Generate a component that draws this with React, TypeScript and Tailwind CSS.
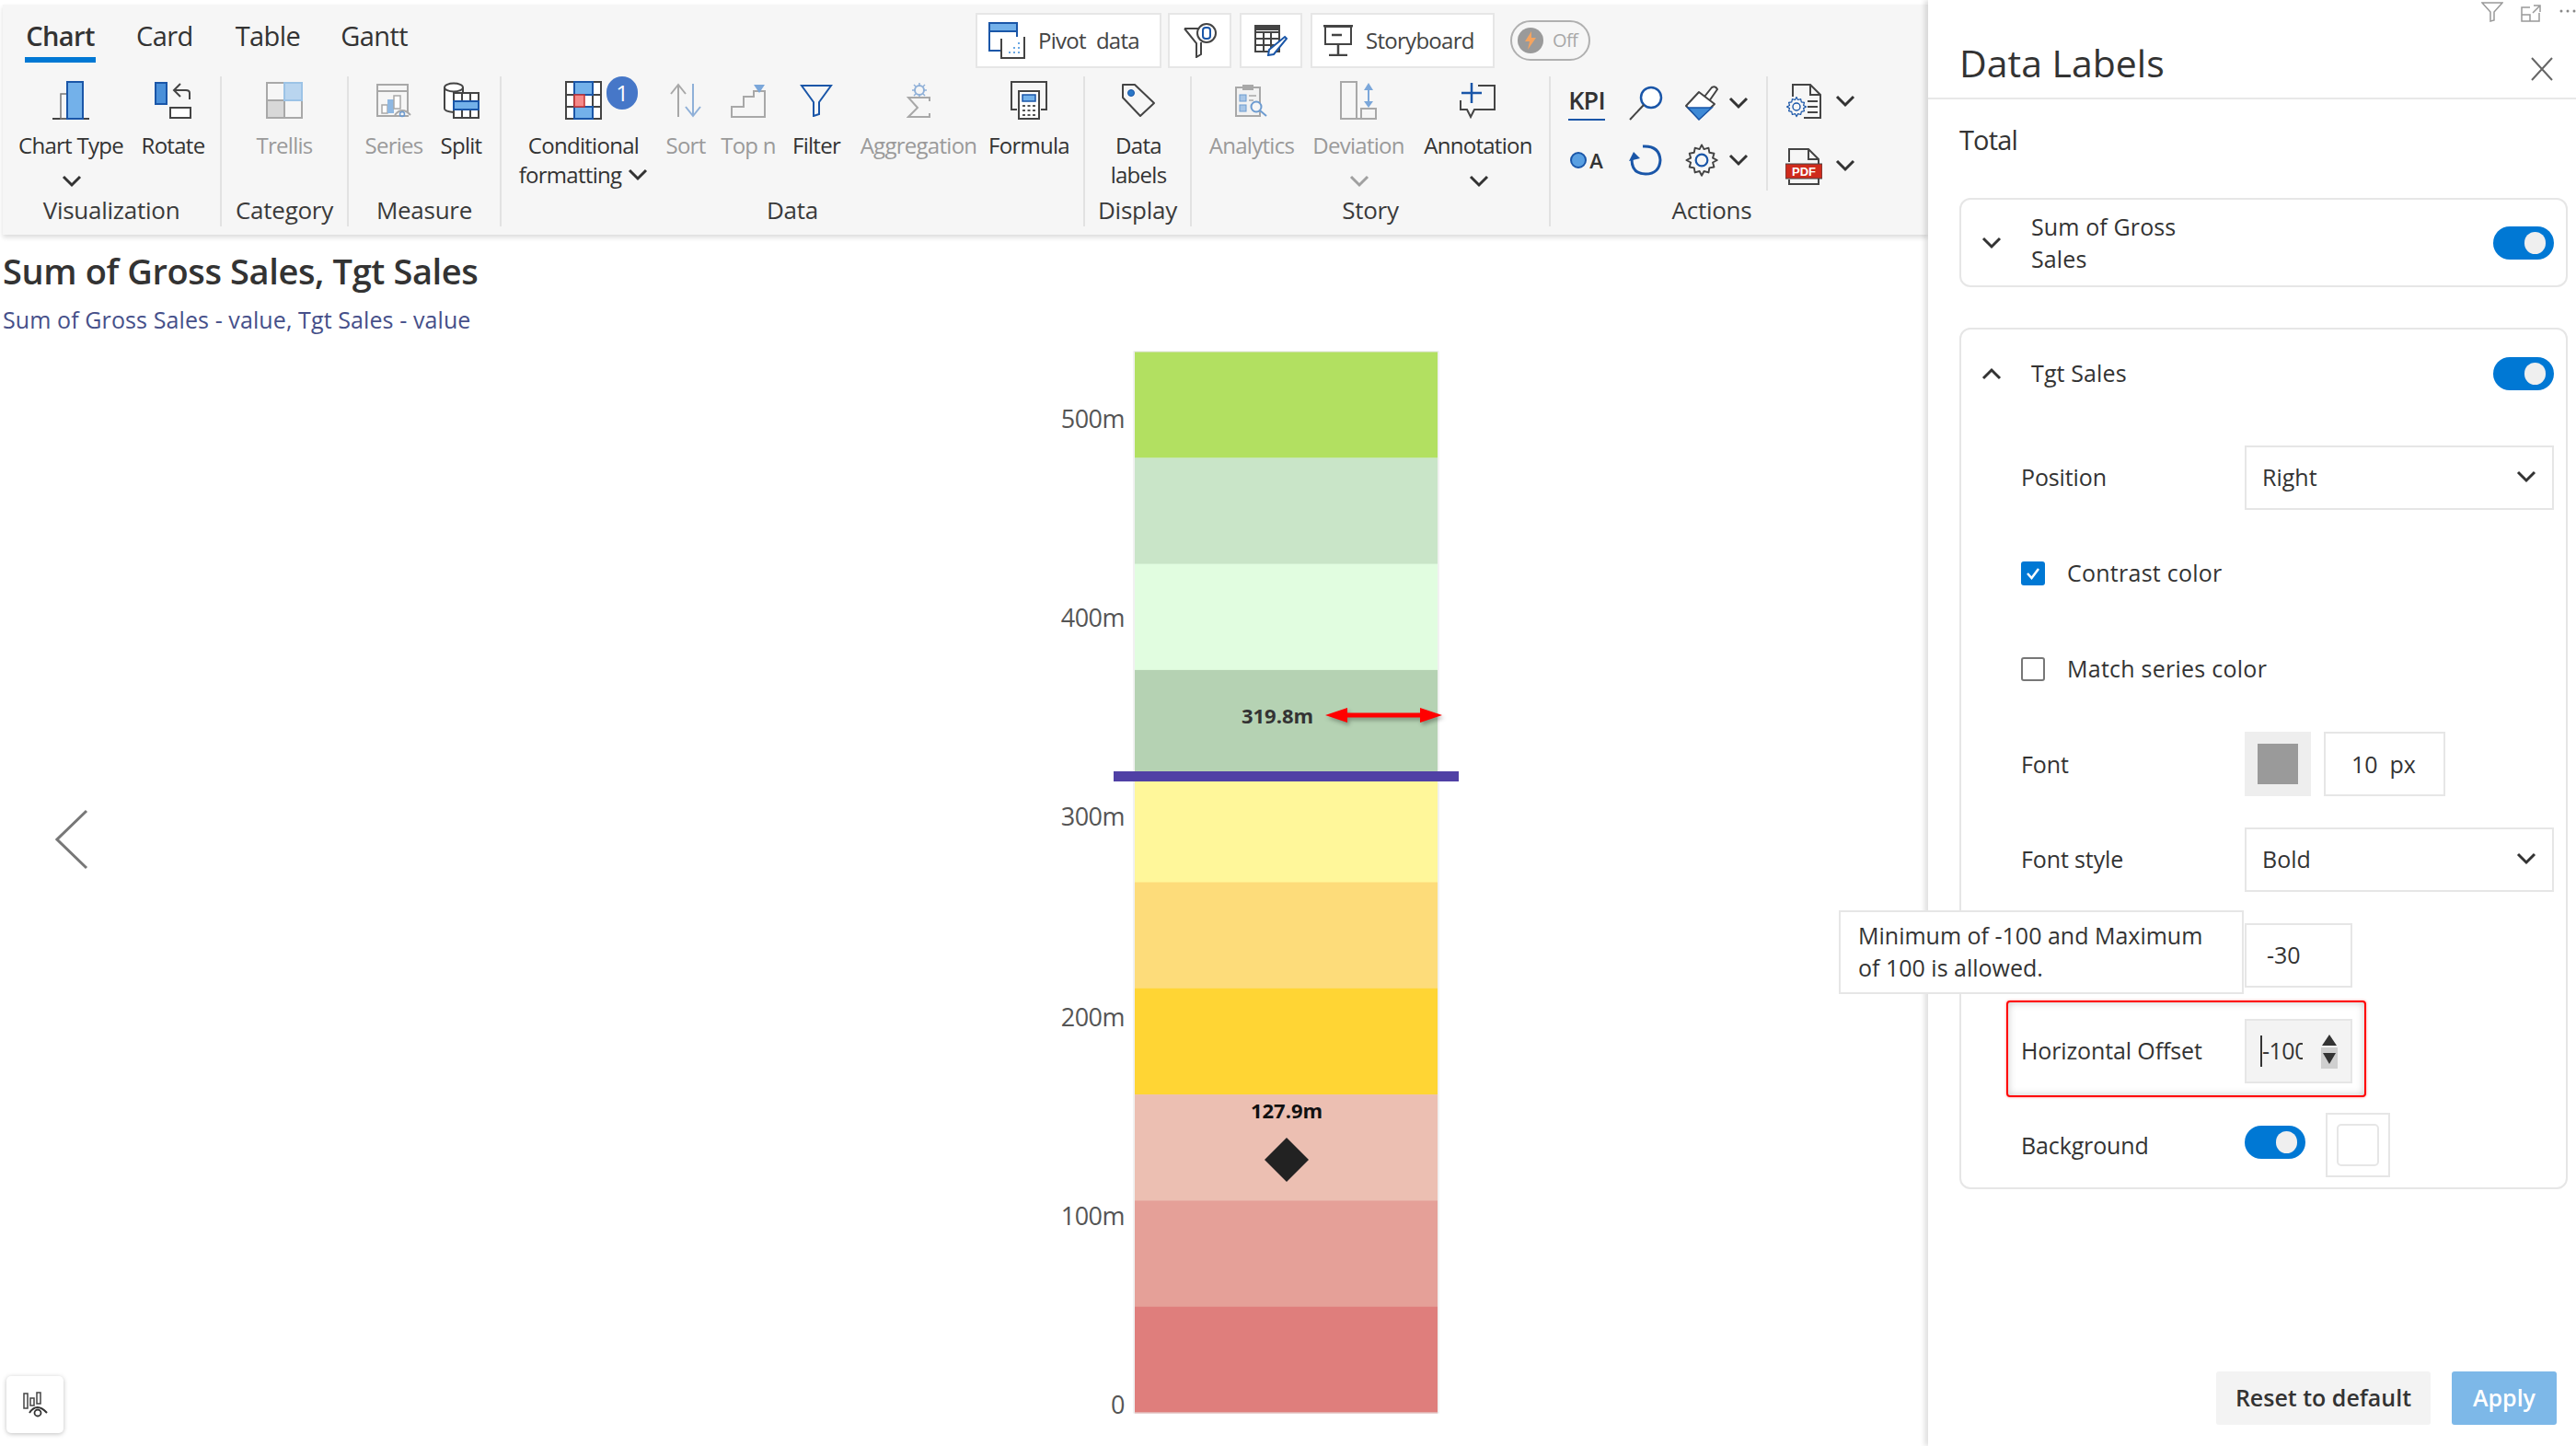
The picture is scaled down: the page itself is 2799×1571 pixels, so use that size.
import React from "react";

const BLUE = "#1a56a8";
const LB = "#73b1ea";
const DK = "#444444";
const GR = "#a8a8a8";

const Svg = ({ w, h, children }: { w: number; h: number; children: React.ReactNode }) => (
  <svg width={w} height={h} viewBox={`0 0 ${w} ${h}`} fill="none" className="block shrink-0">
    {children}
  </svg>
);

const Chevron = ({ dim = false, up = false }: { dim?: boolean; up?: boolean }) => (
  <svg width="22" height="14" viewBox="0 0 22 14" fill="none" className="block shrink-0">
    <path d={up ? "M2 12 L11 3 L20 12" : "M2 2 L11 11 L20 2"} stroke={dim ? "#a0a0a0" : "#333"} strokeWidth="3" />
  </svg>
);

const IconChartType = () => (
  <Svg w={40} h={42}>
    <path d="M0 41H40" stroke={DK} strokeWidth="2" />
    <rect x="9" y="14" width="7" height="27" stroke="#777" strokeWidth="1.5" />
    <rect x="16" y="1" width="17" height="40" fill={LB} stroke={BLUE} strokeWidth="2" />
  </Svg>
);
const IconRotate = () => (
  <Svg w={40} h={40}>
    <rect x="1" y="1" width="12" height="23" fill="#4a90d9" stroke={BLUE} strokeWidth="2" />
    <path d="M38 19V12Q38 9 34 9H21M28 2L21 9L28 16" stroke={DK} strokeWidth="2" />
    <rect x="17" y="28" width="22" height="11" fill="#fff" stroke={DK} strokeWidth="2" />
  </Svg>
);
const IconTrellis = () => (
  <Svg w={40} h={40}>
    <rect x="20" y="1" width="19" height="19" fill="#b9d5ef" />
    <rect x="1" y="20" width="19" height="19" fill="#d8d8d8" />
    <rect x="1" y="1" width="38" height="38" stroke="#a8a8a8" strokeWidth="2" />
    <path d="M20 1V39M1 20H39" stroke="#a8a8a8" strokeWidth="2" />
    <path d="M20 1H39V20H20Z" stroke="#9cc3e6" strokeWidth="2" />
  </Svg>
);
const IconSeries = () => (
  <Svg w={38} h={37}>
    <rect x="1" y="1" width="33" height="34" stroke={GR} strokeWidth="2" />
    <path d="M1 8H34" stroke={GR} strokeWidth="2" />
    <rect x="6" y="23" width="6" height="9" fill="#fff" stroke={GR} strokeWidth="1.5" />
    <rect x="12" y="17" width="7" height="15" fill="#8fb8e2" />
    <rect x="19" y="13" width="7" height="14" fill="#fff" stroke={GR} strokeWidth="1.5" />
    <path d="M20 34Q28 24 37 34" fill="#f6f6f6" stroke={GR} strokeWidth="2" />
    <circle cx="28" cy="33" r="2.5" stroke="#6d9bd0" strokeWidth="1.5" />
  </Svg>
);
const IconSplit = () => (
  <Svg w={40} h={40}>
    <path d="M2 6V28Q2 32 12 32V8Z" fill="#fff" />
    <ellipse cx="12" cy="6" rx="10" ry="4.5" fill="#fff" stroke={DK} strokeWidth="2" />
    <path d="M2 6V29Q2 32 12 33M22 6V11" stroke={DK} strokeWidth="2" />
    <rect x="12" y="12" width="27" height="27" fill="#fff" stroke={DK} strokeWidth="2" />
    <path d="M21 12V39M30 12V39" stroke={DK} strokeWidth="2" />
    <rect x="12" y="21" width="27" height="9" fill={LB} stroke={BLUE} strokeWidth="2" />
  </Svg>
);
const IconConditional = () => (
  <Svg w={40} h={42}>
    <rect x="1" y="1" width="38" height="40" fill="#fff" stroke={DK} strokeWidth="2" />
    <path d="M1 15H39M1 28H39M10 1V41M30 1V41" stroke={DK} strokeWidth="2" />
    <rect x="10" y="1" width="20" height="14" fill={LB} stroke={BLUE} strokeWidth="2" />
    <rect x="10" y="28" width="20" height="13" fill={LB} stroke={BLUE} strokeWidth="2" />
    <rect x="10" y="15" width="11" height="13" fill="#f58a8a" stroke="#c43030" strokeWidth="1.5" />
  </Svg>
);
const IconSort = () => (
  <Svg w={36} h={38}>
    <path d="M10 37V2M2 12L10 2L18 12" stroke={GR} strokeWidth="2" />
    <path d="M26 1V36M18 26L26 36L34 26" stroke="#8fb0d8" strokeWidth="2" />
  </Svg>
);
const IconTopN = () => (
  <Svg w={38} h={37}>
    <path d="M1 36V25H14V14H25V8H37V36Z" stroke={GR} strokeWidth="2" />
    <path d="M25 1H37L31 10Z" fill="#7ba7da" />
  </Svg>
);
const IconFilter = () => (
  <Svg w={36} h={36}>
    <path d="M2 2H34L21 20V33L15 35V20Z" stroke={BLUE} strokeWidth="2" />
  </Svg>
);
const IconAggregation = () => (
  <Svg w={27} h={39}>
    <circle cx="14" cy="8" r="5" stroke="#8fb0d8" strokeWidth="2" />
    <path d="M14 0V3M14 13V16M6 8H9M19 8H22M8 2L10 4M20 2L18 4M8 14L10 12M20 14L18 12" stroke="#8fb0d8" strokeWidth="1.5" />
    <path d="M25 20V16H2L12 27L2 37H25V33" stroke={GR} strokeWidth="2" />
  </Svg>
);
const IconFormula = () => (
  <Svg w={40} h={42}>
    <path d="M7 31H1V1H39V31H33" stroke={DK} strokeWidth="2" />
    <rect x="9" y="11" width="22" height="30" fill="#fff" stroke={DK} strokeWidth="2" />
    <rect x="13" y="15" width="14" height="7" fill={LB} stroke={BLUE} strokeWidth="1.5" />
    <path d="M13 27H16M18.5 27H21.5M24 27H27M13 32H16M18.5 32H21.5M24 32H27M13 37H16M18.5 37H21.5M24 37H27" stroke="#555" strokeWidth="2" />
  </Svg>
);
const IconTag = () => (
  <Svg w={38} h={38}>
    <path d="M2 2H15L36 22L21 36L2 16Z" stroke={DK} strokeWidth="2" strokeLinejoin="round" />
    <circle cx="11" cy="11" r="3.5" fill="#2a78c8" stroke={BLUE} />
  </Svg>
);
const IconAnalytics = () => (
  <Svg w={36} h={36}>
    <rect x="1" y="4" width="26" height="31" fill="#f2f2f2" stroke={GR} strokeWidth="2" />
    <rect x="8" y="1" width="12" height="6" fill={GR} />
    <rect x="5" y="12" width="7" height="7" fill="#a8c6e6" stroke="#6d9bd0" />
    <rect x="5" y="23" width="7" height="7" fill="#a8c6e6" stroke="#6d9bd0" />
    <path d="M15 13H23M15 18H20" stroke={GR} strokeWidth="1.5" />
    <circle cx="23" cy="25" r="5.5" fill="#f6f6f6" stroke="#6d9bd0" strokeWidth="2" />
    <path d="M27 29L34 35" stroke="#6d9bd0" strokeWidth="2" />
  </Svg>
);
const IconDeviation = () => (
  <Svg w={40} h={42}>
    <path d="M0 41H40" stroke={GR} strokeWidth="2" />
    <rect x="1" y="1" width="17" height="40" stroke={GR} strokeWidth="2" />
    <rect x="23" y="30" width="16" height="11" stroke={GR} strokeWidth="2" />
    <path d="M31 4V27" stroke="#7ba7da" strokeWidth="2" />
    <path d="M26 10L31 2L36 10ZM26 22L31 29L36 22Z" fill="#7ba7da" />
  </Svg>
);
const IconAnnotation = () => (
  <Svg w={40} h={40}>
    <path d="M20 4H38V30H16L12 38L8 30H1V20" stroke={DK} strokeWidth="2" />
    <path d="M13 1V23M2 12H24" stroke={BLUE} strokeWidth="2.5" />
  </Svg>
);
const IconMagnifier = () => (
  <Svg w={46} h={38}>
    <circle cx="25" cy="13" r="11" fill="#fff" stroke={BLUE} strokeWidth="2.5" />
    <path d="M17 21L2 37" stroke={DK} strokeWidth="2" />
  </Svg>
);
const IconBrush = () => (
  <Svg w={38} h={38}>
    <path d="M22 12L30 2Q34 0 36 4L27 17" stroke={DK} strokeWidth="2" fill="#fff" />
    <path d="M16 7L33 20L16 36L2 22Z" fill="#fff" stroke={DK} strokeWidth="2" strokeLinejoin="round" />
    <path d="M4 24L30 24L16 37Z" fill="#3f8ad6" stroke={BLUE} strokeWidth="1.5" />
  </Svg>
);
const Gear = ({ c = DK, size = 38 }: { c?: string; size?: number }) => (
  <svg width={size} height={size} viewBox="0 0 24 24" fill="none" className="block shrink-0">
    <path
      d="M12 1.5l1.6 3 3.1-.9.6 3.2 3.2.6-.9 3.1 3 1.5-3 1.6.9 3.1-3.2.6-.6 3.2-3.1-.9-1.6 3-1.5-3-3.1.9-.6-3.2-3.2-.6.9-3.1-3-1.6 3-1.5-.9-3.1 3.2-.6.6-3.2 3.1.9z"
      stroke={c}
      strokeWidth="1.2"
      strokeLinejoin="round"
    />
    <circle cx="12" cy="12" r="4" stroke={BLUE} strokeWidth="1.4" />
  </svg>
);
const IconRefresh = () => (
  <Svg w={44} h={34}>
    <path d="M15 2Q33 1 34 17Q33 32 18 32Q3 32 3 16" stroke={BLUE} strokeWidth="3" />
    <path d="M0 18L5 8L12 15Z" fill={BLUE} />
  </Svg>
);
const IconDocGear = () => (
  <Svg w={40} h={38}>
    <path d="M8 14V1H27L38 12V37H20" stroke={DK} strokeWidth="2" />
    <path d="M27 1V12H38M24 19H35M24 25H35M24 31H35" stroke={DK} strokeWidth="2" />
    <g transform="translate(0,13)">
      <Gear c={BLUE} size={24} />
    </g>
  </Svg>
);
const IconPdf = () => (
  <Svg w={40} h={40}>
    <path d="M4 15V1H25L36 12V39H4V34" stroke={DK} strokeWidth="2" />
    <path d="M25 1V12H36" stroke={DK} strokeWidth="2" />
    <rect x="0" y="17" width="40" height="16" fill="#cf2b1c" stroke={DK} />
    <text x="20" y="30" textAnchor="middle" fill="#fff" fontSize="13" fontWeight="700" className="font-['Liberation_Sans',sans-serif]">
      PDF
    </text>
  </Svg>
);

const IconPivot = () => (
  <Svg w={40} h={40}>
    <rect x="1" y="1" width="30" height="30" fill="#fff" stroke={BLUE} strokeWidth="2" />
    <rect x="1" y="1" width="30" height="9" fill={LB} stroke={BLUE} strokeWidth="2" />
    <rect x="14" y="16" width="25" height="23" fill="#fff" />
    <path d="M14 18V39H39V16" stroke={DK} strokeWidth="2" />
    <path d="M22 33H24M27 33H29M32 33H34M27 28H29M32 28H34M32 23H34" stroke="#6aa8e4" strokeWidth="2" />
  </Svg>
);
const IconFunnelDb = () => (
  <Svg w={36} h={38}>
    <path d="M1 6H24M1 6L14 22V37L19 34V21" stroke={DK} strokeWidth="2" />
    <circle cx="25" cy="11" r="10" fill="#fff" stroke={DK} strokeWidth="2" />
    <rect x="21" y="5" width="8" height="12" rx="3" stroke={BLUE} strokeWidth="2" />
  </Svg>
);
const IconTableEdit = () => (
  <Svg w={36} h={34}>
    <rect x="1" y="1" width="26" height="28" fill="#fff" stroke={DK} strokeWidth="2" />
    <path d="M1 8H27M1 15H27M1 22H27M10 8V29M18 8V29" stroke={DK} strokeWidth="2" />
    <rect x="1" y="1" width="26" height="5" fill={DK} />
    <path d="M33 13L35 15L21 32L15 33L16 27Z" fill="#fff" stroke={BLUE} strokeWidth="2" />
  </Svg>
);
const IconStoryboard = () => (
  <Svg w={32} h={34}>
    <path d="M0 1H32" stroke={DK} strokeWidth="3" />
    <rect x="2" y="2" width="28" height="19" stroke={DK} strokeWidth="2" />
    <path d="M9 11H20M16 21V33M6 33H26" stroke={DK} strokeWidth="2.5" />
  </Svg>
);

type ToolProps = {
  w: number;
  icon: React.ReactNode;
  lines: string[];
  dim?: boolean;
  chev?: boolean;
  inlineChev?: boolean;
};

const Tool = ({ w, icon, lines, dim, chev, inlineChev }: ToolProps) => (
  <div className="flex flex-col items-center shrink-0" style={{ width: w }}>
    <div className="h-[52px] flex items-center justify-center">{icon}</div>
    <div className={`mt-[7px] text-[24px] leading-[32px] text-center tracking-[-0.03em] whitespace-nowrap ${dim ? "text-[#9a9a9a]" : "text-[#333333]"}`}>
      {lines.map((l, i) => (
        <div key={l} className="flex items-center justify-center gap-[7px]">
          {l}
          {inlineChev && i === lines.length - 1 && <Chevron />}
        </div>
      ))}
    </div>
    {chev && (
      <div className="mt-[16px] ml-[2px]">
        <Chevron dim={dim} />
      </div>
    )}
  </div>
);

const Group = ({ w, pl, label, labelW, children, last }: { w: number; pl: number; label: string; labelW?: number; children: React.ReactNode; last?: boolean }) => (
  <div className={`shrink-0 h-full flex flex-col ${last ? "" : "border-r-2 border-[#e2e2e2]"}`} style={{ width: w }}>
    <div className="h-[129px] flex items-start" style={{ paddingLeft: pl }}>
      {children}
    </div>
    <div className="h-[32px] text-[26px] leading-[32px] font-medium text-center text-[#3a3a3a] tracking-[-0.01em]" style={{ width: labelW }}>
      {label}
    </div>
  </div>
);

const TopBtn = ({ className, children }: { className: string; children: React.ReactNode }) => (
  <div className={`h-[60px] bg-white border-2 border-[#e6e6e6] flex items-center text-[24px] text-[#444] tracking-[-0.03em] ${className}`}>{children}</div>
);

const Ribbon = () => (
  <div className="relative z-10 ml-[3px] mt-[5px] h-[250px] bg-[#f6f6f6] shadow-[0_3px_5px_rgba(0,0,0,0.14)] flex flex-col shrink-0">
    <div className="h-[78px] flex items-start shrink-0">
      <div className="flex items-start pl-[24px] text-[29px] text-[#333] tracking-[-0.02em] w-[1057px]">
        <div className="h-[63px] w-[77px] pt-[14px] leading-[40px] font-semibold border-b-[6px] border-[#0078d4] text-center">Chart</div>
        <div className="ml-[44px] pt-[14px] leading-[40px]">Card</div>
        <div className="ml-[46px] pt-[14px] leading-[40px]">Table</div>
        <div className="ml-[44px] pt-[14px] leading-[40px]">Gantt</div>
      </div>
      <div className="flex items-center mt-[9px]">
        <TopBtn className="w-[202px] pl-[12px] gap-[14px]">
          <IconPivot />
          <span className="whitespace-pre">Pivot  data</span>
        </TopBtn>
        <TopBtn className="ml-[7px] w-[69px] justify-center">
          <IconFunnelDb />
        </TopBtn>
        <TopBtn className="ml-[9px] w-[68px] justify-center">
          <IconTableEdit />
        </TopBtn>
        <TopBtn className="ml-[9px] w-[200px] pl-[12px] gap-[14px]">
          <IconStoryboard />
          <span>Storyboard</span>
        </TopBtn>
        <div className="ml-[17px] w-[87px] h-[44px] rounded-full border-2 border-[#b0b0b0] flex items-center pl-[6px] gap-[10px]">
          <div className="w-[28px] h-[28px] rounded-full bg-[#9a9a9a] flex items-center justify-center">
            <svg width="14" height="20" viewBox="0 0 14 20" className="block">
              <path d="M8 0L1 11H6L4 20L13 7H8Z" fill="#f4a460" />
            </svg>
          </div>
          <span className="text-[20px] text-[#a8a8a8] tracking-[-0.03em]">Off</span>
        </div>
      </div>
    </div>
    <div className="h-[163px] flex shrink-0">
      <Group w={238} pl={10} label="Visualization">
        <Tool w={128} icon={<IconChartType />} lines={["Chart Type"]} chev />
        <Tool w={94} icon={<IconRotate />} lines={["Rotate"]} />
      </Group>
      <Group w={138} pl={8} label="Category">
        <Tool w={120} icon={<IconTrellis />} lines={["Trellis"]} dim />
      </Group>
      <Group w={166} pl={14} label="Measure">
        <Tool w={70} icon={<IconSeries />} lines={["Series"]} dim />
        <Tool w={76} icon={<IconSplit />} lines={["Split"]} />
      </Group>
      <Group w={634} pl={14} label="Data">
        <div className="relative shrink-0">
          <Tool w={150} icon={<IconConditional />} lines={["Conditional", "formatting"]} inlineChev />
          <div className="absolute left-[100px] top-[0px] w-[34px] h-[36px] rounded-full bg-[#4677c8] text-white text-[24px] leading-[36px] text-center">1</div>
        </div>
        <Tool w={72} icon={<IconSort />} lines={["Sort"]} dim />
        <Tool w={64} icon={<IconTopN />} lines={["Top n"]} dim />
        <Tool w={84} icon={<IconFilter />} lines={["Filter"]} />
        <Tool w={138} icon={<IconAggregation />} lines={["Aggregation"]} dim />
        <Tool w={102} icon={<IconFormula />} lines={["Formula"]} />
      </Group>
      <Group w={116} pl={8} label="Display">
        <Tool w={100} icon={<IconTag />} lines={["Data", "labels"]} />
      </Group>
      <Group w={390} pl={5} label="Story">
        <Tool w={120} icon={<IconAnalytics />} lines={["Analytics"]} dim />
        <Tool w={112} icon={<IconDeviation />} lines={["Deviation"]} dim chev />
        <Tool w={148} icon={<IconAnnotation />} lines={["Annotation"]} chev />
      </Group>
      <Group w={407} pl={0} label="Actions" labelW={350} last>
        <div className="flex h-[124px]">
          <div className="w-[234px] grid grid-cols-[78px_57px_58px_22px] grid-rows-[58px_66px] justify-items-center items-center">
            <div className="text-[27px] font-semibold leading-[32px] text-[#333] border-b-[2px] border-[#1a56a8] pb-[4px] tracking-[-0.03em]">KPI</div>
            <IconMagnifier />
            <IconBrush />
            <Chevron />
            <div className="flex items-center gap-[3px]">
              <div className="w-[18px] h-[18px] rounded-full bg-[#5aa0e2] border-2 border-[#1a56a8]" />
              <span className="text-[22px] font-semibold text-[#333]">A</span>
            </div>
            <IconRefresh />
            <Gear />
            <Chevron />
          </div>
          <div className="border-l-2 border-[#e2e2e2] pl-[16px] grid grid-cols-[46px_44px] grid-rows-[54px_70px] items-center justify-items-center">
            <IconDocGear />
            <Chevron />
            <div className="mt-[18px]">
              <IconPdf />
            </div>
            <div className="mt-[16px]">
              <Chevron />
            </div>
          </div>
        </div>
      </Group>
    </div>
  </div>
);

const bands = ["#b2e061", "#c9e5c8", "#e1fde0", "#b5d2b3", "#fff79a", "#fddc7a", "#ffd534", "#ecbfb2", "#e5a098", "#df7e7c"];
const axis: [string, number][] = [
  ["500m", 85],
  ["400m", 301],
  ["300m", 517],
  ["200m", 735],
  ["100m", 951],
  ["0", 1156],
];

const Chart = () => (
  <svg width="2095" height="1201" viewBox="0 0 2095 1201" className="block">
    {bands.map((c, i) => (
      <rect key={c} x={1233} y={12 + i * 115.3} width={329} height={115.8} fill={c} />
    ))}
    <rect x={1232} y={12} width={331} height={1153} stroke="#e4e4e4" strokeWidth="1" fill="none" />
    {axis.map(([t, y]) => (
      <text key={t} x={1222} y={y + 10} textAnchor="end" fontSize="27" fill="#555" letterSpacing="-0.5">
        {t}
      </text>
    ))}
    <rect x={1210} y={468} width={375} height={11} fill="#5040a5" />
    <text x={1388} y={416} textAnchor="middle" fontSize="22" fontWeight="700" fill="#333">
      319.8m
    </text>
    <g style={{ filter: "drop-shadow(2px 3px 2px rgba(0,0,0,0.3))" }}>
      <path d="M1462 407H1544" stroke="#ff0000" strokeWidth="5" />
      <path d="M1440 407L1464 399V415ZM1567 407L1543 399V415Z" fill="#ff0000" />
    </g>
    <text x={1398} y={845} textAnchor="middle" fontSize="22" fontWeight="700" fill="#111">
      127.9m
    </text>
    <path d="M1398 866L1422 890L1398 914L1374 890Z" fill="#222" />
  </svg>
);

const Toggle = () => (
  <div className="w-[66px] h-[36px] rounded-full bg-[#0078d4] relative shrink-0">
    <div className="absolute right-[9px] top-[6px] w-[23px] h-[24px] rounded-full bg-[#efefef]" />
  </div>
);

const Select = ({ v }: { v: string }) => (
  <div className="w-[336px] h-[70px] border-2 border-[#e6e6e6] flex items-center justify-between pl-[17px] pr-[17px] text-[25px] text-[#333]">
    <span>{v}</span>
    <div className="-mt-[2px]">
      <Chevron />
    </div>
  </div>
);

const Row = ({ label, children, className = "" }: { label: string; children: React.ReactNode; className?: string }) => (
  <div className={`relative h-[70px] flex items-center shrink-0 ${className}`}>
    <div className="w-[243px] text-[25px] text-[#333] tracking-[-0.005em] whitespace-nowrap">{label}</div>
    {children}
  </div>
);

const Check = ({ on, label }: { on: boolean; label: string }) => (
  <div className="h-[70px] flex items-center gap-[24px] shrink-0">
    <div className={`w-[26px] h-[26px] rounded-[3px] flex items-center justify-center ${on ? "bg-[#0078d4]" : "border-2 border-[#777] bg-white"}`}>
      {on && (
        <svg width="20" height="20" viewBox="0 0 20 20" className="block">
          <path d="M4 10L8.5 15L16 5" stroke="#fff" strokeWidth="2.5" fill="none" />
        </svg>
      )}
    </div>
    <span className="text-[25px] font-medium text-[#333] tracking-[0.01em]">{label}</span>
  </div>
);

const Panel = () => (
  <div className="relative w-[704px] shrink-0 h-full bg-white shadow-[-4px_0_5px_rgba(0,0,0,0.12)] z-20 flex flex-col">
    <div className="absolute top-[2px] left-[601px] flex items-start">
      <svg width="24" height="22" viewBox="0 0 24 22" fill="none" className="block">
        <path d="M1 1H23L14 11V20L10 21V11Z" stroke="#999" strokeWidth="1.5" />
      </svg>
      <svg width="22" height="20" viewBox="0 0 22 20" fill="none" className="block ml-[19px] mt-[3px]">
        <path d="M10 3H1V18H20V9M1 11H10V18M13 9L20 2M14 1H21V8" stroke="#999" strokeWidth="1.5" />
      </svg>
      <svg width="20" height="6" viewBox="0 0 20 6" className="block ml-[19px] mt-[7px]">
        <circle cx="3" cy="3" r="1.5" fill="#888" />
        <circle cx="10" cy="3" r="1.5" fill="#888" />
        <circle cx="17" cy="3" r="1.5" fill="#888" />
      </svg>
    </div>
    <div className="h-[108px] shrink-0 border-b-2 border-[#e8e8e8] flex items-start justify-between pl-[34px] pr-[25px]">
      <div className="mt-[40px] text-[41px] leading-[56px] text-[#333]">Data Labels</div>
      <svg width="24" height="26" viewBox="0 0 24 26" fill="none" className="block mt-[62px]">
        <path d="M1 1L23 25M23 1L1 25" stroke="#666" strokeWidth="2" />
      </svg>
    </div>
    <div className="flex flex-col flex-1 pl-[34px] pr-[9px]">
      <div className="mt-[24px] h-[40px] text-[29px] leading-[40px] text-[#333] tracking-[-0.03em]">Total</div>
      <div className="mt-[43px] h-[97px] border-2 border-[#e6e6e6] rounded-[12px] flex items-center pl-[22px] pr-[13px]">
        <Chevron />
        <div className="ml-[32px] text-[25px] leading-[35px] font-medium text-[#333] tracking-[0.005em] flex-1">
          Sum of Gross
          <br />
          Sales
        </div>
        <Toggle />
      </div>
      <div className="mt-[44px] h-[936px] border-2 border-[#e6e6e6] rounded-[12px] flex flex-col pl-[65px] pr-[13px]">
        <div className="h-[95px] flex items-center -ml-[43px] shrink-0">
          <Chevron up />
          <div className="ml-[32px] text-[25px] font-medium text-[#333] tracking-[0.005em] flex-1">Tgt Sales</div>
          <Toggle />
        </div>
        <div className="mt-[31px] flex flex-col gap-[33.8px]">
          <Row label="Position">
            <Select v="Right" />
          </Row>
          <Check on label="Contrast color" />
          <Check on={false} label="Match series color" />
          <Row label="Font">
            <div className="w-[72px] h-[70px] bg-[#eeeeee] flex items-center justify-center">
              <div className="w-[44px] h-[44px] bg-[#9a9a9a]" />
            </div>
            <div className="ml-[14px] w-[132px] h-[70px] border-2 border-[#e6e6e6] pl-[28px] flex items-center text-[25px] text-[#333] whitespace-pre">10  px</div>
          </Row>
          <Row label="Font style">
            <Select v="Bold" />
          </Row>
          <Row label="">
            <div className="w-[117px] h-[70px] border-2 border-[#e6e6e6] pl-[22px] flex items-center text-[25px] text-[#333]">-30</div>
            <div className="absolute -left-[198px] -top-[14px] w-[440px] h-[91px] bg-white border-2 border-[#e6e6e6] pl-[19px] flex flex-col justify-center text-[25px] leading-[35px] text-[#333] z-30 whitespace-nowrap">
              <div>Minimum of -100 and Maximum</div>
              <div>of 100 is allowed.</div>
            </div>
          </Row>
          <Row label="Horizontal Offset">
            <div className="relative w-[117px] h-[70px] bg-[#f3f3f3] border-2 border-[#e6e6e6] flex items-center pl-[15px]">
              <div className="w-[2px] h-[34px] bg-[#333]" />
              <div className="w-[44px] overflow-hidden text-[25px] text-[#333] whitespace-nowrap tracking-[-0.02em]">-100</div>
              <div className="ml-[20px] w-[18px] flex flex-col items-center">
                <svg width="18" height="16" viewBox="0 0 18 16" className="block">
                  <path d="M9 2L17 14H1Z" fill="#333" />
                </svg>
                <div className="w-[18px] h-[23px] bg-[#cfcfcf] flex items-center justify-center">
                  <svg width="16" height="14" viewBox="0 0 16 14" className="block">
                    <path d="M8 13L15 1H1Z" fill="#333" />
                  </svg>
                </div>
              </div>
            </div>
            <div className="absolute -left-[16px] -top-[20px] w-[391px] h-[105px] border-2 border-[#ff0000] rounded-[4px] shadow-[inset_0_0_8px_rgba(0,0,0,0.22),0_0_3px_rgba(255,0,0,0.4)] pointer-events-none" />
          </Row>
          <Row label="Background" className="-mt-[1px]">
            <div className="-mt-[8px] shrink-0">
              <Toggle />
            </div>
            <div className="ml-[22px] -mt-[2px] w-[70px] h-[70px] border-2 border-[#e6e6e6] flex items-center justify-center">
              <div className="w-[46px] h-[46px] rounded-[5px] border-2 border-[#e6e6e6]" />
            </div>
          </Row>
        </div>
      </div>
      <div className="mt-auto mb-[23px] flex justify-end gap-[23px] pr-[12px]">
        <div className="w-[233px] h-[58px] bg-[#f3f3f3] rounded-[3px] flex items-center justify-center text-[25px] font-semibold text-[#333]">Reset to default</div>
        <div className="w-[114px] h-[58px] bg-[#7db8e8] rounded-[3px] flex items-center justify-center text-[25px] font-semibold text-white">Apply</div>
      </div>
    </div>
  </div>
);

export default function App() {
  return (
    <div className="w-[2799px] h-[1571px] overflow-hidden bg-white flex font-['Open_Sans',sans-serif]">
      <div className="w-[2095px] h-full flex flex-col shrink-0">
        <Ribbon />
        <div className="pl-[3px] pt-[15px] h-[48px] box-content text-[38px] leading-[48px] font-semibold text-[#333] tracking-[-0.01em] whitespace-nowrap">Sum of Gross Sales, Tgt Sales</div>
        <div className="pl-[3px] pt-[12px] pb-[6px] text-[25px] leading-[34px] text-[#46508a] tracking-[0.004em] whitespace-nowrap">Sum of Gross Sales - value, Tgt Sales - value</div>
        <div className="relative flex-1">
          <Chart />
          <svg width="36" height="66" viewBox="0 0 36 66" fill="none" className="absolute left-[60px] top-[509px] block">
            <path d="M34 2L2 33L34 64" stroke="#777" strokeWidth="3" />
          </svg>
          <div className="absolute left-[7px] bottom-[14px] w-[62px] h-[62px] bg-white rounded-[5px] shadow-[0_1px_5px_rgba(0,0,0,0.25)] flex items-center justify-center">
            <svg width="28" height="28" viewBox="0 0 28 28" fill="none" className="block">
              <path d="M2 2H6V18H2ZM9 7H13V15H9ZM16 1H20V13H16Z" stroke="#444" strokeWidth="1.5" />
              <path d="M8 23Q16 11 27 23" stroke="#333" strokeWidth="2" />
              <circle cx="17" cy="23" r="3.5" stroke="#333" strokeWidth="1.8" />
            </svg>
          </div>
        </div>
      </div>
      <Panel />
    </div>
  );
}
